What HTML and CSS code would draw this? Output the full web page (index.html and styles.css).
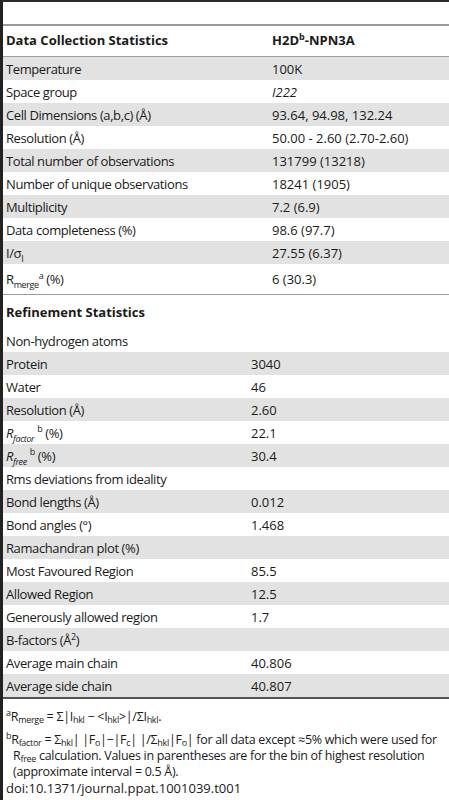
FILE: index.html
```html
<!DOCTYPE html>
<html>
<head>
<meta charset="utf-8">
<link rel="stylesheet" href="styles.css">
</head>
<body>
<div class="page">
  <div class="top-gap"></div>
  <table class="stats dc">
    <thead>
      <tr class="head"><th>Data Collection Statistics</th><th>H2D<sup>b</sup>-NPN3A</th></tr>
    </thead>
    <tbody>
      <tr class="alt"><td>Temperature</td><td>100K</td></tr>
      <tr><td>Space group</td><td><i>I222</i></td></tr>
      <tr class="alt"><td>Cell Dimensions (a,b,c) (Å)</td><td>93.64, 94.98, 132.24</td></tr>
      <tr><td>Resolution (Å)</td><td>50.00 - 2.60 (2.70-2.60)</td></tr>
      <tr class="alt"><td>Total number of observations</td><td>131799 (13218)</td></tr>
      <tr><td>Number of unique observations</td><td>18241 (1905)</td></tr>
      <tr class="alt"><td>Multiplicity</td><td>7.2 (6.9)</td></tr>
      <tr><td>Data completeness (%)</td><td>98.6 (97.7)</td></tr>
      <tr class="alt"><td>I/σ<sub>I</sub></td><td>27.55 (6.37)</td></tr>
      <tr class="last"><td>R<sub>merge</sub><sup>a</sup> (%)</td><td>6 (30.3)</td></tr>
    </tbody>
  </table>
  <table class="stats ref">
    <thead>
      <tr class="head"><th colspan="2">Refinement Statistics</th></tr>
    </thead>
    <tbody>
      <tr><td colspan="2">Non-hydrogen atoms</td></tr>
      <tr class="alt"><td>Protein</td><td>3040</td></tr>
      <tr><td>Water</td><td>46</td></tr>
      <tr class="alt"><td>Resolution (Å)</td><td>2.60</td></tr>
      <tr><td><i>R<sub>factor</sub></i><sup class="sp">b</sup> (%)</td><td>22.1</td></tr>
      <tr class="alt"><td><i>R<sub>free</sub></i><sup class="sp">b</sup> (%)</td><td>30.4</td></tr>
      <tr><td colspan="2">Rms deviations from ideality</td></tr>
      <tr class="alt"><td>Bond lengths (Å)</td><td>0.012</td></tr>
      <tr><td>Bond angles (°)</td><td>1.468</td></tr>
      <tr class="alt"><td colspan="2">Ramachandran plot (%)</td></tr>
      <tr><td>Most Favoured Region</td><td>85.5</td></tr>
      <tr class="alt"><td>Allowed Region</td><td>12.5</td></tr>
      <tr><td>Generously allowed region</td><td>1.7</td></tr>
      <tr class="alt"><td colspan="2">B-factors (Å<sup>2</sup>)</td></tr>
      <tr><td>Average main chain</td><td>40.806</td></tr>
      <tr class="alt"><td>Average side chain</td><td>40.807</td></tr>
    </tbody>
  </table>
  <div class="notes">
    <p class="n1"><sup>a</sup>R<sub>merge</sub> = Σ|I<sub>hkl</sub> − &lt;I<sub>hkl</sub>&gt;|/ΣI<sub>hkl</sub>.</p>
    <p><sup>b</sup>R<sub>factor</sub> = Σ<sub>hkl</sub>| |F<sub>o</sub>|−|F<sub>c</sub>| |/Σ<sub>hkl</sub>|F<sub>o</sub>| for all data except ≈5% which were used for<br>R<sub>free</sub> calculation. Values in parentheses are for the bin of highest resolution<br>(approximate interval = 0.5 Å).</p>
    <p class="doi">doi:10.1371/journal.ppat.1001039.t001</p>
  </div>
</div>
</body>
</html>
```

FILE: styles.css
```css
html, body {
  margin: 0;
  padding: 0;
  background: #ffffff;
}
body {
  font-family: "Open Sans", "Liberation Sans", sans-serif;
  color: #1a1a1a;
  font-size: 13px;
}
.page {
  border-left: 3px solid #222;
  border-top: 2px solid #2a2a2a;
  height: 800px;
  box-sizing: border-box;
  width: 449px;
  overflow: hidden;
}
.top-gap {
  height: 22px;
}
.stats {
  width: 100%;
  border-collapse: collapse;
}
.stats th, .stats td {
  text-align: left;
  padding: 0 0 0 3px;
  height: 23px;
  vertical-align: middle;
  white-space: nowrap;
  line-height: 16px;
}
.stats td:first-child {
  letter-spacing: -0.4px;
}
.stats th {
  font-weight: bold;
}
.dc .head th {
  height: 27px;
  padding-bottom: 3px;
  border-top: 2px solid #9a9a9a;
  border-bottom: 1px solid #a0a0a0;
}
.dc td:first-child, .dc th:first-child {
  width: 263px;
}
.ref td:first-child {
  width: 242px;
}
.dc .last td {
  height: 30px;
}
.ref .head th {
  height: 34px;
  border-top: 1px solid #9a9a9a;
}
.ref tbody tr:last-child td {
  border-bottom: 2px solid #555;
}
.alt td {
  background: #e2e2e2;
}
sub, sup {
  font-size: 9px;
  line-height: 0;
}
sup.sp {
  margin-left: 3px;
}
.notes {
  padding: 10px 0 0 3px;
  font-size: 12.5px;
  line-height: 16px;
  letter-spacing: -0.3px;
  white-space: nowrap;
}
.notes sub {
  font-size: 9px;
  vertical-align: -2px;
}
.notes sup {
  font-size: 9px;
}
.notes p {
  margin: 0;
  padding-left: 7px;
  text-indent: -7px;
}
.notes p.n1 {
  margin-bottom: 7px;
}
.notes p.doi {
  padding-left: 0;
  text-indent: 0;
  font-size: 13px;
  letter-spacing: 0;
}
```
